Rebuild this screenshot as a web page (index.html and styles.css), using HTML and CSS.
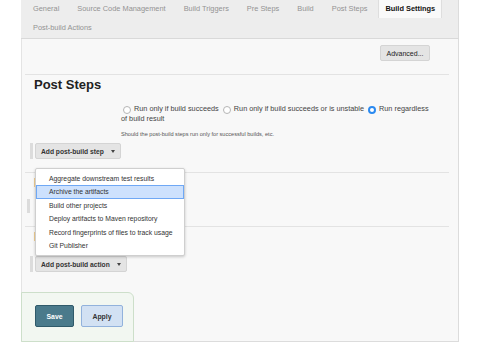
FILE: index.html
```html
<!DOCTYPE html>
<html lang="en">
<head>
    <meta charset="UTF-8">
    <meta name="viewport" content="width=device-width, initial-scale=1.0">
    <title>Job Configuration</title>
    <link rel="stylesheet" href="styles.css">
</head>
<body>
    <div class="config">
        <div class="tabbar">
            <span class="tab">General</span>
            <span class="tab">Source Code Management</span>
            <span class="tab">Build Triggers</span>
            <span class="tab">Pre Steps</span>
            <span class="tab">Build</span>
            <span class="tab">Post Steps</span>
            <span class="tab active">Build Settings</span>
            <span class="tab">Post-build Actions</span>
        </div>

        <div class="body">
            <div class="adv-row">
                <button class="btn">Advanced...</button>
            </div>

            <div class="section">
                <h2>Post Steps</h2>
                <div class="radios">
                    <span class="radio"></span>Run only if build succeeds
                    <span class="radio"></span>Run only if build succeeds or is unstable
                    <span class="radio checked"></span>Run regardless of build result
                </div>
                <div class="hint">Should the post-build steps run only for successful builds, etc.</div>
                <div class="hetero">
                    <div class="dd-wrap">
                        <button class="btn">Add post-build step <span class="caret"></span></button>
                        <ul class="menu">
                            <li>Aggregate downstream test results</li>
                            <li class="selected">Archive the artifacts</li>
                            <li>Build other projects</li>
                            <li>Deploy artifacts to Maven repository</li>
                            <li>Record fingerprints of files to track usage</li>
                            <li>Git Publisher</li>
                        </ul>
                    </div>
                </div>
            </div>

            <div class="section">
                <h2>Build Settings</h2>
                <div class="row-bar">E-mail Notification</div>
            </div>

            <div class="section last">
                <h2>Post-build Actions</h2>
                <div class="hetero">
                    <button class="btn">Add post-build action <span class="caret"></span></button>
                </div>
            </div>

            <div class="sticker">
                <button class="save">Save</button>
                <button class="apply">Apply</button>
            </div>
        </div>
    </div>
</body>
</html>
```

FILE: styles.css
```css
body {
    font-family: 'Liberation Sans', Arial, sans-serif;
    background-color: #fff;
    margin: 0;
    padding: 0;
    color: #333;
}

.config {
    width: 438px;
    margin-left: 21px;
    box-sizing: border-box;
}

.tabbar {
    display: flex;
    flex-wrap: wrap;
    row-gap: 1px;
    padding: 0 0 1px 5px;
    background-color: #ededed;
    border-bottom: 1px solid #d9d9d9;
    border-right: 1px solid #dcdcdc;
}

.tab {
    height: 18px;
    line-height: 18px;
    padding: 0 7px;
    margin-right: 4px;
    font-size: 7.4px;
    color: #939393;
    box-sizing: border-box;
}

.tab.active {
    background-color: #f9f9f9;
    border-left: 1px solid #dedede;
    border-right: 1px solid #dedede;
    padding: 0 6px;
    color: #111;
    font-weight: bold;
}

.body {
    background-color: #f8f8f8;
    border-left: 1px solid #e4e4e4;
    border-right: 1px solid #dcdcdc;
    border-bottom: 1px solid #dcdcdc;
}

.btn {
    font-family: inherit;
    font-size: 6.7px;
    font-weight: bold;
    color: #333;
    background-color: #e4e4e4;
    border: 1px solid #d4d4d4;
    border-radius: 2px;
    height: 16px;
    padding: 0 5px;
    cursor: pointer;
}

.caret {
    display: inline-block;
    width: 0;
    height: 0;
    margin-left: 5px;
    vertical-align: middle;
    border-left: 2px solid transparent;
    border-right: 2px solid transparent;
    border-top: 3px solid #444;
}

.adv-row {
    display: flex;
    justify-content: flex-end;
    padding: 6px 28px 13px 0;
}

.adv-row .btn {
    width: 50px;
    padding: 0;
    font-size: 7px;
    font-weight: normal;
    color: #222;
}

.section {
    margin: 0 9px 0 3px;
    padding: 0 0 13px 9px;
    border-top: 1px solid #e3e3e3;
}

.section.last {
    padding-bottom: 0;
}

.section h2 {
    margin: 2px 0 0;
    font-size: 13px;
    line-height: 15px;
    color: #222;
}

.radios {
    margin: 12px 16px 0 87px;
    font-size: 7.3px;
    line-height: 10px;
    color: #444;
}

.radio {
    display: inline-block;
    width: 8px;
    height: 8px;
    margin: 0 3px 0 2px;
    vertical-align: -3px;
    border: 1px solid #b5b5b5;
    border-radius: 50%;
    background: #fff;
    box-sizing: border-box;
}

.radio.checked {
    background: #fff;
    border: 2.5px solid #2b8af0;
}

.hint {
    margin: 6px 0 0 87px;
    font-size: 5.6px;
    line-height: 8px;
    color: #555;
}

.hetero {
    display: flex;
    margin: 5px 0 0 -4px;
    padding-left: 2px;
    border-left: 3px solid #dcdcdc;
}

.section.last .hetero {
    margin-top: 12px;
}

.dd-wrap {
    display: flex;
    position: relative;
}

.menu {
    position: absolute;
    top: 25px;
    left: 0;
    z-index: 5;
    width: 150px;
    margin: 0;
    padding: 2.5px 0;
    list-style: none;
    background: #fff;
    border: 1px solid #cfcfcf;
    border-radius: 2px;
    box-shadow: 0 1px 3px rgba(0, 0, 0, 0.2);
    box-sizing: border-box;
}

.menu li {
    height: 13.5px;
    line-height: 13.5px;
    padding-left: 13px;
    font-size: 6.8px;
    color: #333;
    box-sizing: border-box;
}

.menu li.selected {
    background-color: #cde1fd;
    border: 1px solid #6fa8f5;
    line-height: 11.5px;
    padding-left: 12px;
}

.row-bar {
    margin: 9px 0 0 -7px;
    padding-left: 7px;
    height: 14px;
    line-height: 14px;
    border-left: 3px solid #dcdcdc;
    font-size: 7.3px;
    box-sizing: border-box;
}

.sticker {
    display: flex;
    gap: 7px;
    width: 113px;
    margin: 20px 0 -1px -1px;
    padding: 12px 0 14px 13px;
    background-color: #f2f7f1;
    border: 1px solid #cddfca;
    border-radius: 0 6px 0 0;
    box-sizing: border-box;
}

.save, .apply {
    height: 22px;
    font-family: inherit;
    font-size: 6.9px;
    font-weight: bold;
    border-radius: 2px;
    padding: 0;
}

.save {
    width: 39px;
    color: #fff;
    background-color: #4a7a8b;
    border: 1px solid #2f5a6a;
}

.apply {
    width: 42px;
    color: #333;
    background-color: #d2e1f3;
    border: 1px solid #92b2dc;
}
```
